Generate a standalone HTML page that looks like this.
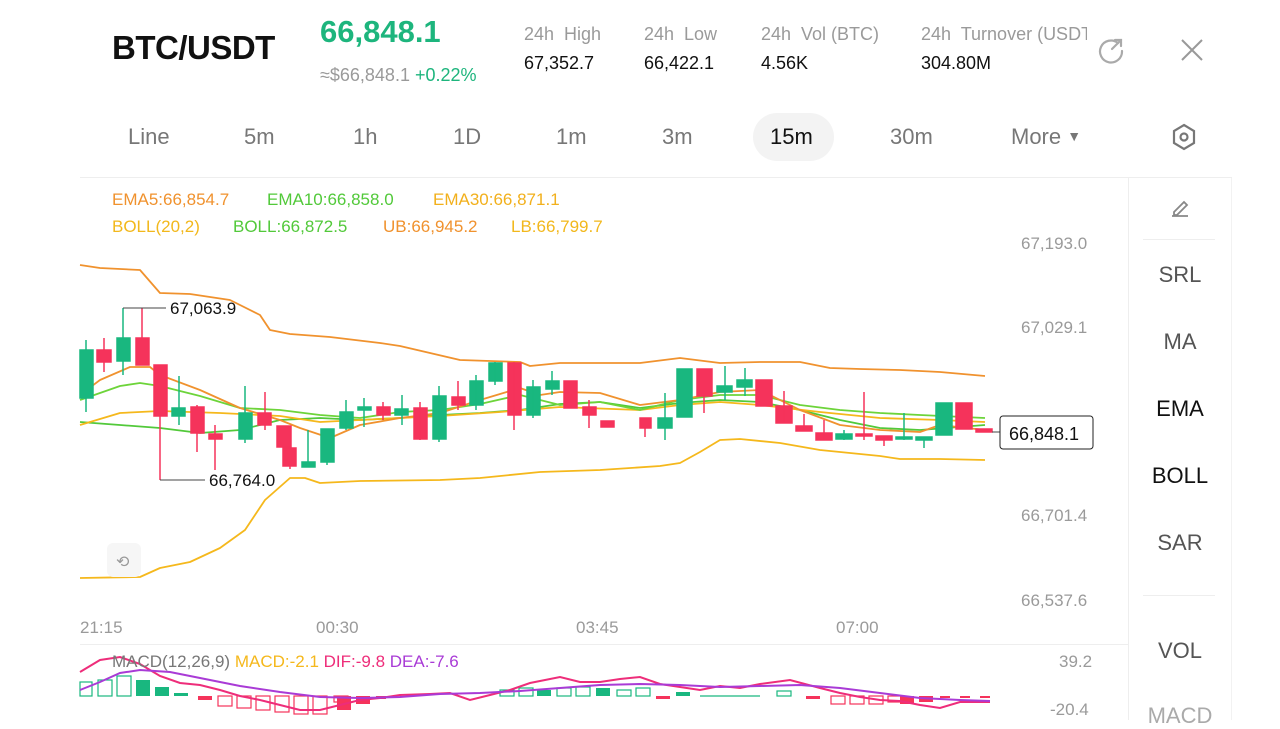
<!DOCTYPE html>
<html><head><meta charset="utf-8"><style>
*{margin:0;padding:0;box-sizing:border-box}
body{width:1280px;height:720px;background:#fff;font-family:"Liberation Sans",sans-serif;position:relative;overflow:hidden;color:#111}
.a{position:absolute;white-space:nowrap}
.g{color:#9a9a9a}
.tab{position:absolute;top:124px;font-size:22px;color:#777}
.side{position:absolute;left:1130px;width:100px;text-align:center;font-size:22px;color:#555}
</style></head><body>
<div class="a" style="left:112px;top:29px;font-size:33px;font-weight:bold;letter-spacing:-0.5px">BTC/USDT</div>
<div class="a" style="left:320px;top:14px;font-size:31px;font-weight:bold;color:#1db57d">66,848.1</div>
<div class="a g" style="left:320px;top:65px;font-size:18px">≈$66,848.1 <span style="color:#1db57d">+0.22%</span></div>
<div class="a g" style="left:524px;top:24px;font-size:18px">24h&nbsp; High</div>
<div class="a" style="left:524px;top:53px;font-size:18px">67,352.7</div>
<div class="a g" style="left:644px;top:24px;font-size:18px">24h&nbsp; Low</div>
<div class="a" style="left:644px;top:53px;font-size:18px">66,422.1</div>
<div class="a g" style="left:761px;top:24px;font-size:18px">24h&nbsp; Vol (BTC)</div>
<div class="a" style="left:761px;top:53px;font-size:18px">4.56K</div>
<div class="a g" style="left:921px;top:24px;font-size:18px;width:166px;overflow:hidden">24h&nbsp; Turnover (USDT)</div>
<div class="a" style="left:921px;top:53px;font-size:18px">304.80M</div>
<svg class="a" style="left:1098px;top:36px" width="28" height="28" viewBox="0 0 28 28" fill="none" stroke="#aaa" stroke-width="2.2" stroke-linecap="round"><path d="M20 7A11 11 0 1 0 24 15"/><path d="M17 4h6v6"/><path d="M23 4l-9 9"/></svg>
<svg class="a" style="left:1180px;top:38px" width="24" height="24" viewBox="0 0 24 24" stroke="#999" stroke-width="2"><path d="M2 2l20 20M22 2L2 22"/></svg>
<div class="tab" style="left:128px">Line</div>
<div class="tab" style="left:244px">5m</div>
<div class="tab" style="left:353px">1h</div>
<div class="tab" style="left:453px">1D</div>
<div class="tab" style="left:556px">1m</div>
<div class="tab" style="left:662px">3m</div>
<div class="a" style="left:753px;top:113px;width:81px;height:48px;border-radius:24px;background:#f3f3f3"></div>
<div class="tab" style="left:770px;color:#111">15m</div>
<div class="tab" style="left:890px">30m</div>
<div class="tab" style="left:1011px">More <span style="font-size:14px;position:relative;top:-3px">▼</span></div>
<svg class="a" style="left:1171px;top:123px" width="26" height="28" viewBox="0 0 26 28" fill="none" stroke="#777" stroke-width="2.2"><path d="M13 2L23 8V20L13 26L3 20V8Z"/><circle cx="13" cy="14" r="3.5"/></svg>
<div class="a" style="left:80px;top:177px;width:1152px;height:1px;background:#eee"></div>
<div class="a" style="left:1128px;top:178px;width:1px;height:542px;background:#eee"></div>
<div class="a" style="left:1231px;top:178px;width:1px;height:542px;background:#f2f2f2"></div>
<svg class="a" style="left:1168px;top:196px" width="24" height="24" viewBox="0 0 24 24" fill="none" stroke="#888" stroke-width="1.8"><path d="M4 20h16M6 16l10-10 3 3-10 10H6z"/></svg>
<div class="a" style="left:1143px;top:239px;width:72px;height:1px;background:#eee"></div>
<div class="side" style="top:262px">SRL</div>
<div class="side" style="top:329px">MA</div>
<div class="side" style="top:396px;color:#111">EMA</div>
<div class="side" style="top:463px;color:#111">BOLL</div>
<div class="side" style="top:530px">SAR</div>
<div class="a" style="left:1143px;top:595px;width:72px;height:1px;background:#eee"></div>
<div class="side" style="top:638px">VOL</div>
<div class="side" style="top:703px;color:#aaa">MACD</div>
<div class="a" style="left:112px;top:190px;font-size:17px;color:#f0922e">EMA5:66,854.7</div>
<div class="a" style="left:267px;top:190px;font-size:17px;color:#52c93a">EMA10:66,858.0</div>
<div class="a" style="left:433px;top:190px;font-size:17px;color:#f2b01c">EMA30:66,871.1</div>
<div class="a" style="left:112px;top:217px;font-size:17px;color:#f2b81c">BOLL(20,2)</div>
<div class="a" style="left:233px;top:217px;font-size:17px;color:#52c93a">BOLL:66,872.5</div>
<div class="a" style="left:383px;top:217px;font-size:17px;color:#f0922e">UB:66,945.2</div>
<div class="a" style="left:511px;top:217px;font-size:17px;color:#f2b81c">LB:66,799.7</div>
<div class="a g" style="left:1021px;top:234px;font-size:17px">67,193.0</div>
<div class="a g" style="left:1021px;top:318px;font-size:17px">67,029.1</div>
<div class="a g" style="left:1021px;top:506px;font-size:17px">66,701.4</div>
<div class="a g" style="left:1021px;top:591px;font-size:17px">66,537.6</div>
<div class="a g" style="left:80px;top:618px;font-size:17px">21:15</div>
<div class="a g" style="left:316px;top:618px;font-size:17px">00:30</div>
<div class="a g" style="left:576px;top:618px;font-size:17px">03:45</div>
<div class="a g" style="left:836px;top:618px;font-size:17px">07:00</div>
<div class="a" style="left:80px;top:644px;width:1048px;height:1px;background:#eee"></div>
<svg class="a" style="left:0;top:0" width="1128" height="720">
<g fill="none" stroke-width="1.8" stroke-linejoin="round">
<polyline stroke="#f0922e" points="80,265 100,268 140,270 160,293 190,294 230,300 260,315 270,330 290,334 330,337 380,343 400,346 460,360 520,362 530,366 560,363 640,363 680,358 720,363 760,362 800,362 830,368 860,369 900,370 940,372 985,376"/>
<polyline stroke="#f5b81c" points="80,578 140,577 160,568 190,562 220,548 245,530 265,500 290,478 305,478 320,483 360,481 440,480 480,478 540,472 600,470 660,466 680,463 700,452 720,440 740,439 780,443 820,450 880,456 900,459 940,459 985,460"/>
<polyline stroke="#52c93a" points="80,422 120,425 160,428 200,433 240,430 280,420 320,418 360,420 400,418 440,415 480,413 520,410 560,404 600,402 640,408 680,403 720,400 760,402 800,410 840,420 880,428 920,430 985,425"/>
<polyline stroke="#f5b81c" points="80,425 120,413 160,411 220,413 280,416 320,422 360,420 440,416 500,412 560,407 640,410 680,405 720,402 760,405 820,412 880,418 940,420 985,422"/>
<polyline stroke="#6dd43a" points="80,400 120,386 140,383 160,386 200,396 240,408 280,410 320,415 360,418 400,412 440,410 480,404 520,395 560,405 600,402 640,410 680,400 720,395 760,395 800,405 840,410 880,413 920,415 985,418"/>
<polyline stroke="#f0922e" points="80,395 100,380 130,367 150,367 160,375 200,390 240,408 280,420 300,428 330,438 360,425 400,418 440,413 480,400 520,388 540,395 560,392 600,393 640,405 680,400 720,392 760,390 800,410 840,425 880,430 920,432 940,425 985,430"/>
</g>
<g stroke-width="1.5">
<g fill="#19b77f" stroke="#19b77f">
<line x1="86" y1="340" x2="86" y2="412"/><rect x="80" y="350" width="13" height="48"/>
<line x1="123" y1="308" x2="123" y2="375"/><rect x="117" y="338" width="13" height="23"/>
<line x1="179" y1="376" x2="179" y2="425"/><rect x="172" y="408" width="13" height="8"/>
<line x1="245" y1="386" x2="245" y2="443"/><rect x="239" y="413" width="13" height="26"/>
<line x1="308" y1="430" x2="308" y2="467"/><rect x="302" y="462" width="13" height="5"/>
<line x1="327" y1="429" x2="327" y2="465"/><rect x="321" y="429" width="13" height="33"/>
<rect x="340" y="412" width="13" height="16"/><line x1="346" y1="400" x2="346" y2="430"/>
<line x1="364" y1="398" x2="364" y2="427"/><rect x="358" y="407" width="13" height="3"/>
<line x1="402" y1="395" x2="402" y2="425"/><rect x="395" y="409" width="13" height="6"/>
<rect x="433" y="396" width="13" height="43"/><line x1="439" y1="386" x2="439" y2="442"/>
<rect x="470" y="381" width="13" height="24"/><line x1="476" y1="375" x2="476" y2="410"/>
<rect x="489" y="363" width="13" height="18"/><line x1="495" y1="362" x2="495" y2="385"/>
<rect x="527" y="387" width="13" height="28"/><line x1="533" y1="380" x2="533" y2="418"/>
<rect x="546" y="381" width="13" height="8"/><line x1="552" y1="371" x2="552" y2="395"/>
<rect x="658" y="418" width="14" height="10"/><line x1="665" y1="393" x2="665" y2="440"/>
<rect x="677" y="369" width="15" height="48"/>
<rect x="717" y="386" width="15" height="6"/><line x1="725" y1="366" x2="725" y2="400"/>
<rect x="737" y="380" width="15" height="7"/><line x1="745" y1="368" x2="745" y2="396"/>
<rect x="836" y="434" width="16" height="5"/><line x1="844" y1="430" x2="844" y2="440"/>
<rect x="896" y="437" width="16" height="2"/><line x1="904" y1="413" x2="904" y2="440"/>
<rect x="916" y="437" width="16" height="3"/><line x1="924" y1="437" x2="924" y2="448"/>
<rect x="936" y="403" width="16" height="32"/>
</g>
<g fill="#f5335b" stroke="#f5335b">
<line x1="104" y1="338" x2="104" y2="372"/><rect x="97" y="350" width="14" height="12"/>
<line x1="142" y1="308" x2="142" y2="365"/><rect x="136" y="338" width="13" height="27"/>
<line x1="160" y1="365" x2="160" y2="480"/><rect x="154" y="365" width="13" height="51"/>
<line x1="197" y1="405" x2="197" y2="452"/><rect x="191" y="407" width="13" height="26"/>
<line x1="215" y1="425" x2="215" y2="470"/><rect x="209" y="434" width="13" height="5"/>
<line x1="265" y1="392" x2="265" y2="430"/><rect x="258" y="413" width="13" height="12"/>
<line x1="284" y1="426" x2="284" y2="452"/><rect x="277" y="426" width="14" height="21"/>
<line x1="290" y1="448" x2="290" y2="469"/><rect x="283" y="448" width="13" height="18"/>
<rect x="377" y="407" width="13" height="8"/><line x1="383" y1="402" x2="383" y2="420"/>
<rect x="414" y="408" width="13" height="31"/><line x1="420" y1="402" x2="420" y2="440"/>
<rect x="452" y="397" width="13" height="8"/><line x1="458" y1="381" x2="458" y2="410"/>
<rect x="508" y="363" width="13" height="52"/><line x1="514" y1="362" x2="514" y2="430"/>
<rect x="564" y="381" width="13" height="27"/>
<rect x="583" y="407" width="13" height="8"/><line x1="589" y1="400" x2="589" y2="428"/>
<rect x="601" y="421" width="13" height="6"/>
<rect x="640" y="418" width="11" height="10"/><line x1="645" y1="428" x2="645" y2="437"/>
<rect x="697" y="369" width="15" height="27"/><line x1="704" y1="396" x2="704" y2="413"/>
<rect x="756" y="380" width="16" height="26"/>
<rect x="776" y="406" width="16" height="17"/><line x1="784" y1="391" x2="784" y2="423"/>
<rect x="796" y="426" width="16" height="5"/><line x1="804" y1="414" x2="804" y2="431"/>
<rect x="816" y="433" width="16" height="7"/><line x1="824" y1="420" x2="824" y2="440"/>
<rect x="856" y="434" width="16" height="2"/><line x1="864" y1="392" x2="864" y2="440"/>
<rect x="876" y="436" width="16" height="4"/><line x1="884" y1="436" x2="884" y2="446"/>
<rect x="956" y="403" width="16" height="26"/>
<rect x="976" y="429" width="16" height="3"/>
</g>
</g>
<g stroke="#444" stroke-width="1" fill="none"><polyline points="123,308 166,308"/><polyline points="160,480 205,480"/><line x1="992" y1="432" x2="1000" y2="432"/></g>
<text x="170" y="314" font-size="17" fill="#111" font-family="Liberation Sans">67,063.9</text>
<text x="209" y="486" font-size="17" fill="#111" font-family="Liberation Sans">66,764.0</text>
<rect x="1000" y="416" width="93" height="33" rx="3" fill="#fff" stroke="#222"/>
<text x="1009" y="440" font-size="18" fill="#111" font-family="Liberation Sans">66,848.1</text>
<rect x="107" y="543" width="34" height="34" rx="6" fill="#f6f6f6"/>
<text x="116" y="567" font-size="16" fill="#999">⟲</text>
<g stroke-width="1.2">
<g fill="none" stroke="#19b77f">
<rect x="80" y="682" width="12" height="14"/><rect x="98" y="680" width="14" height="16"/><rect x="117" y="676" width="14" height="20"/>
<rect x="500" y="690" width="14" height="6"/><rect x="519" y="688" width="14" height="8"/><rect x="557" y="688" width="14" height="8"/><rect x="576" y="687" width="14" height="9"/>
<rect x="617" y="690" width="14" height="6"/><rect x="636" y="688" width="14" height="8"/>
<line x1="700" y1="696" x2="760" y2="696"/><rect x="777" y="691" width="14" height="5"/>
</g>
<g fill="#19b77f"><rect x="136" y="680" width="14" height="16"/><rect x="155" y="687" width="14" height="9"/><rect x="174" y="693" width="14" height="3"/><rect x="537" y="690" width="14" height="6"/><rect x="596" y="688" width="14" height="8"/><rect x="676" y="692" width="14" height="4"/></g>
<g fill="none" stroke="#f5335b">
<rect x="218" y="696" width="14" height="10"/><rect x="237" y="696" width="14" height="12"/><rect x="256" y="696" width="14" height="14"/><rect x="275" y="696" width="14" height="16"/><rect x="294" y="696" width="14" height="18"/><rect x="313" y="696" width="14" height="18"/>
<rect x="831" y="696" width="14" height="8"/><rect x="850" y="696" width="14" height="8"/><rect x="869" y="696" width="14" height="8"/><rect x="888" y="696" width="14" height="6"/>
<rect x="334" y="696" width="14" height="6" />
</g>
<g fill="#f5335b"><rect x="198" y="696" width="14" height="4"/><rect x="337" y="696" width="14" height="14"/><rect x="356" y="696" width="14" height="8"/><rect x="376" y="696" width="10" height="3"/><rect x="656" y="696" width="14" height="3"/><rect x="806" y="696" width="14" height="3"/><rect x="900" y="696" width="14" height="8"/><rect x="919" y="696" width="14" height="6"/><rect x="940" y="696" width="10" height="2"/><rect x="960" y="696" width="10" height="2"/><rect x="980" y="696" width="10" height="2"/></g>
</g>
<polyline fill="none" stroke="#ee2d7a" stroke-width="2" points="80,672 100,660 120,657 140,664 160,676 180,683 200,685 220,690 240,696 260,700 280,705 300,710 320,710 340,705 360,700 380,698 400,695 430,694 450,693 470,700 490,695 510,690 530,683 560,677 580,682 600,682 620,679 640,677 660,684 700,690 720,686 740,688 760,684 790,680 820,688 840,693 860,697 880,700 900,701 920,705 940,708 960,702 990,702"/>
<polyline fill="none" stroke="#a93bd6" stroke-width="2" points="80,690 100,682 120,673 140,670 170,672 200,678 240,686 280,692 320,697 360,698 400,697 440,694 480,693 520,691 560,688 600,685 640,684 680,685 720,687 760,686 800,685 840,688 880,693 920,698 960,700 990,701"/>
</svg>
<div class="a" style="left:112px;top:652px;font-size:17px;color:#777">MACD(12,26,9) <span style="color:#f5b81c">MACD:-2.1</span> <span style="color:#ee2d7a">DIF:-9.8</span> <span style="color:#a93bd6">DEA:-7.6</span></div>
<div class="a g" style="left:1059px;top:652px;font-size:17px">39.2</div>
<div class="a g" style="left:1050px;top:700px;font-size:17px">-20.4</div>
</body></html>
